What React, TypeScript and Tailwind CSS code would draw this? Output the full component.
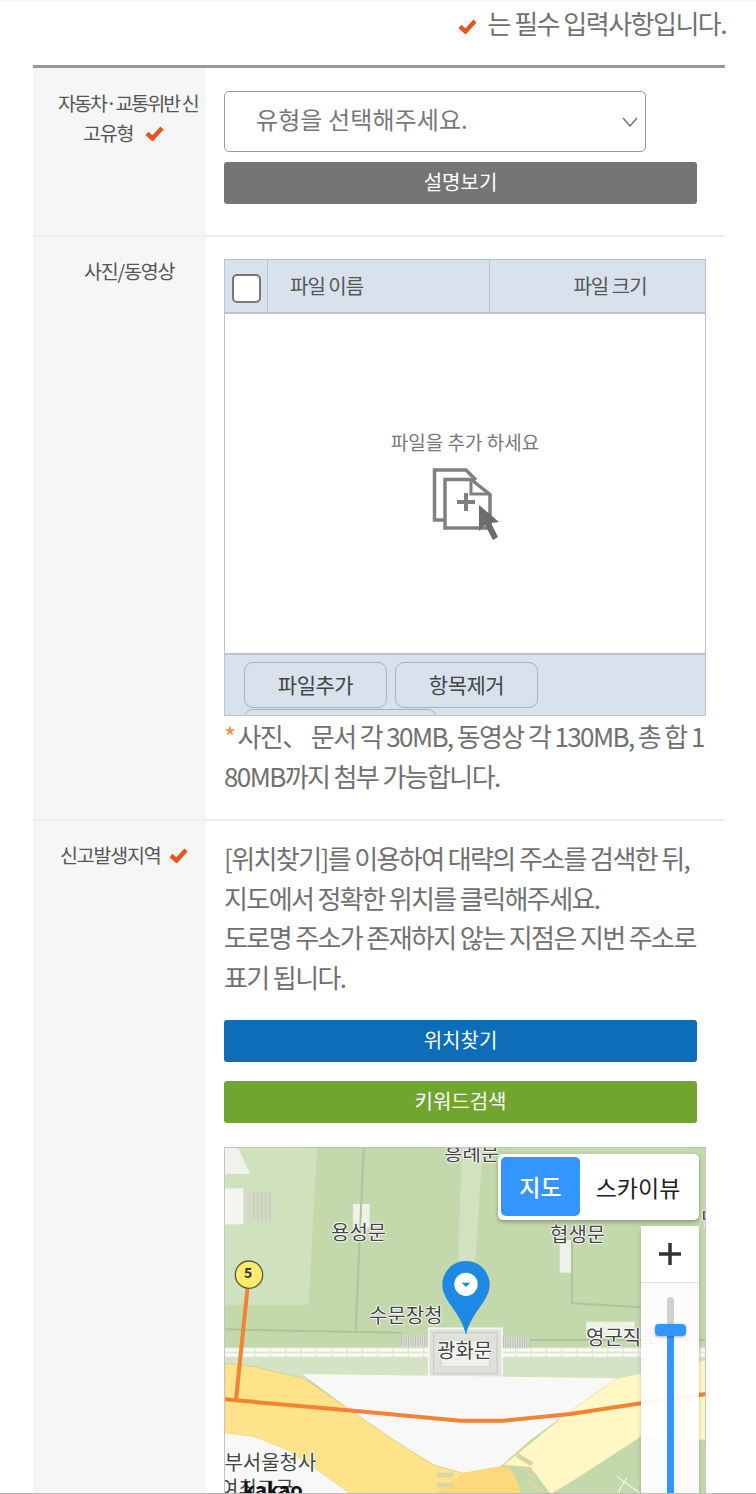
const font = "font-['Noto_Sans_CJK_KR','Noto_Sans',sans-serif]";

function Check({ className }: { className: string }) {
  return (
    <svg viewBox="0 0 19 15" className={className}>
      <path d="M2 7.5l5.5 5L17 2" fill="none" stroke="#e8541a" strokeWidth="4.4" />
    </svg>
  );
}

function FileIcon() {
  return (
    <svg viewBox="0 0 70 76" className="h-[76px] w-[70px]">
      <path d="M14 54H3.5V4H35l10 10" fill="none" stroke="#808080" strokeWidth="3.5" />
      <path d="M14 13.5h26l19 15V62H14z" fill="#fff" stroke="#808080" strokeWidth="3.5" />
      <path d="M40 14v14h18" fill="none" stroke="#808080" strokeWidth="3" />
      <path d="M26 36h18M35 27v18" stroke="#808080" strokeWidth="4" />
      <path d="M48 39v26l6-6 8 15 5-3-7-14 8-1z" fill="#6c6c6e" />
    </svg>
  );
}

function ActionButton({ label, color }: { label: string; color: string }) {
  return (
    <button className={`h-[42px] w-[473px] rounded-[3px] pb-[3px] text-[20px] text-white ${color}`}>
      {label}
    </button>
  );
}

function MapLabel({ text, className }: { text: string; className: string }) {
  return (
    <span className={`absolute whitespace-nowrap text-[20px] leading-none text-[#444] [text-shadow:-1px_0_#fff,1px_0_#fff,0_-1px_#fff,0_1px_#fff] ${className}`}>
      {text}
    </span>
  );
}

function KakaoMap() {
  return (
    <div className="relative h-[346px] overflow-hidden border-x border-t border-[#c4c4c4]">
      <svg viewBox="14 24 1443 1038" className="absolute left-0 top-0 h-[346px] w-[481px]">
        <rect x="14" y="24" width="1443" height="1038" fill="#c3d8ab" />
        <path d="M14 24h276l-25 470H14z" fill="#d0e1bd" />
        <path d="M14 24h40l35 78H14z" fill="#f0f3ea" />
        <path d="M14 145h56v108H14z" fill="#f3f5ee" />
        <path d="M70 145h20l3 5h70v95H93l-3 8H70z" fill="#d2dcc5" />
        <path d="M100 155v85M112 155v85M124 155v85M136 155v85M148 155v85" stroke="#b8c4a8" strokeWidth="2" />
        <path d="M725 24h62l-22 340h-52z" fill="#d2e2c0" />
        <path d="M398 192h50v70h-50z" fill="#eef1e6" />
        <path d="M1018 300h40v98h-40z" fill="#eef1e6" />
        <path d="M1098 545h145v50h-145z" fill="#eef1e6" />
        <path d="M430 24l-24 550M1055 300v190l210 12M14 568l530 10M850 600h607" fill="none" stroke="#afc39c" strokeWidth="6" />

        <path d="M14 650h1443v70H14z" fill="#d3e3c3" />
        <path d="M14 622h1443v30H14z" fill="#dfe6d4" />
        <path d="M14 630h1443M14 645h1443" stroke="#fbfbf8" strokeWidth="9" strokeDasharray="42 4" />
        <rect x="542" y="585" width="82" height="35" fill="#dcdfd6" />
        <rect x="848" y="590" width="80" height="35" fill="#dcdfd6" />
        <path d="M542 602h82M848 607h80" stroke="#b9bdb2" strokeWidth="33" strokeDasharray="3 4" />
        <rect x="625" y="565" width="220" height="148" fill="#dfe2da" stroke="#f7f7f4" strokeWidth="5" />
        <rect x="640" y="578" width="190" height="122" fill="none" stroke="#c5c9bf" strokeWidth="3" />
        <rect x="662" y="600" width="146" height="80" fill="#eff0eb" stroke="#d0d3ca" strokeWidth="3" />

        <path d="M245 702l945 13-60 55-90 50-110 80-90 80-110 20-90-25-120-75-130-90z" fill="#f8f8f8" />
        <path d="M850 975l190-155 150-105 72-15 195-40v240l-195-10-200 130-70 42H990l-60-80z" fill="#fff7c4" stroke="#e2d9a0" strokeWidth="2" />
        <path d="M14 670l86 10 150 35 140 95 130 90 120 75 90 25 110-20 60 82H390L290 990l-90-60-100-40-86-10z" fill="#fee38b" stroke="#dcc577" strokeWidth="2" />
        <path d="M14 880l86 10 100 40 90 60 100 72H14z" fill="#f8f8f8" />
        <path d="M730 1000l110-20c30 0 50 20 60 82H640z" fill="#fdd97c" />
        <path d="M890 945l45 28M905 985l45 28M920 1025l45 28M650 1005h50M650 1035h50" stroke="#d8d5a8" strokeWidth="14" />
        <path d="M1190 1010l70 50M1190 1062l30-50" stroke="#fff" strokeWidth="3" fill="none" />

        <path d="M82 440l-35 340" stroke="#f58232" strokeWidth="12" fill="none" />
        <path d="M14 778l386 34 320 30h130l200-20 212-32 195-28" stroke="#f58232" strokeWidth="12" fill="none" />
        <circle cx="86" cy="404" r="41" fill="#ffec6e" stroke="#5c5a3c" strokeWidth="4" />
        <path d="M737 363c-40 0-71 32-71 71 0 50 55 80 71 150 16-70 71-100 71-150 0-39-31-71-71-71z" fill="#1e88e5" />
        <circle cx="737" cy="433" r="35" fill="#fff" />
        <path d="M724 428h26l-13 13z" fill="#1e88e5" />
      </svg>

      <span className="absolute left-[19px] top-[117px] text-[14px] font-bold leading-none text-[#333]">5</span>
      <MapLabel text="흥례문" className="left-[219px] top-[-5px]" />
      <MapLabel text="용성문" className="left-[106px] top-[74px]" />
      <MapLabel text="협생문" className="left-[325px] top-[76px]" />
      <MapLabel text="수문장청" className="left-[144px] top-[157px]" />
      <MapLabel text="광화문" className="left-[212px] top-[192px]" />
      <MapLabel text="영군직소" className="left-[361px] top-[179px]" />
      <MapLabel text="민" className="left-[476px] top-[61px]" />
      <MapLabel text="정부서울청사" className="left-[-19px] top-[304px]" />
      <MapLabel text="여최고궁" className="left-[-5px] top-[330px]" />
      <span className="absolute left-[18px] top-[331px] text-[20px] font-bold leading-none text-[#111]">kakao</span>

      <div className="absolute left-[273px] top-[6px] flex h-[66px] w-[201px] rounded-[5px] bg-white p-[3px] shadow-[0_2px_4px_rgba(0,0,0,0.3)]">
        <div className="flex h-[59px] w-[79px] items-center justify-center rounded-[5px] bg-[#3396ff] text-[23px] font-medium text-white">
          지도
        </div>
        <div className="flex flex-1 items-center justify-center text-[23px] text-[#222]">스카이뷰</div>
      </div>

      <div className="absolute bottom-0 left-[416px] top-[78px] w-[58px] rounded-t-[5px] bg-white/95 shadow-[0_2px_4px_rgba(0,0,0,0.2)]">
        <div className="flex h-[57px] items-center justify-center border-b border-[#ddd] bg-white">
          <svg viewBox="0 0 24 24" className="h-[24px] w-[24px]">
            <path d="M1 12h22M12 1v22" stroke="#333" strokeWidth="3.5" />
          </svg>
        </div>
        <div className="relative mx-auto mt-[14px] h-[300px] w-[7px] rounded-t-[4px] bg-[#cfcfcf]">
          <div className="absolute inset-x-0 bottom-0 top-[33px] bg-[#3396ff]" />
          <div className="absolute left-[-12px] top-[27px] h-[12px] w-[31px] rounded-[4px] bg-[#3396ff] shadow-[0_1px_3px_rgba(0,0,0,0.3)]" />
        </div>
      </div>
    </div>
  );
}

export default function App() {
  return (
    <div className={`h-[1494px] overflow-hidden border-b border-[#bbb] bg-white ${font}`}>
      <div className="flex h-[65px] items-start justify-end gap-[10px] border-t border-[#f4f4f4] pr-[30px] pt-[4px]">
        <Check className="mt-[14px] h-[15px] w-[19px]" />
        <p className="text-[26px] leading-[36px] tracking-[-1.5px] text-[#707070]">는 필수 입력사항입니다.</p>
      </div>

      <div className="ml-[33px] w-[692px] border-t-[3px] border-[#999]">
        {/* 유형 */}
        <div className="flex h-[169px] border-b-[2px] border-[#eee]">
          <div className="w-[173px] shrink-0 bg-[#f6f6f6] pt-[20px] text-[19.5px] leading-[30px] tracking-[-1.2px] text-[#555]">
            <p className="pl-[25px] tracking-[-1.9px]">자동차·교통위반 신</p>
            <p className="flex items-center gap-[12px] pl-[50px]">
              고유형 <Check className="h-[15px] w-[19px]" />
            </p>
          </div>
          <div className="flex-1 pl-[18px] pt-[23px]">
            <div className="flex h-[61px] w-[422px] items-center justify-between rounded-[5px] border border-[#999] pl-[31px] pr-[7px] text-[24px] tracking-[0.1px] text-[#777]">
              <span className="pb-[6px]">유형을 선택해주세요.</span>
              <svg viewBox="0 0 16 10" className="h-[10px] w-[16px]">
                <path d="M1 1l7 8 7-8" fill="none" stroke="#666" strokeWidth="1.2" />
              </svg>
            </div>
            <div className="mt-[10px]">
              <ActionButton label="설명보기" color="bg-[#757575]" />
            </div>
          </div>
        </div>

        {/* 사진 */}
        <div className="flex h-[584px] border-b-[2px] border-[#eee]">
          <div className="w-[173px] shrink-0 bg-[#f6f6f6] pl-[51px] pt-[19px] text-[19.5px] leading-[30px] tracking-[-1.2px] text-[#555]">
            사진/동영상
          </div>
          <div className="flex-1 pl-[18px] pt-[22px]">
            <div className="h-[457px] w-[482px] overflow-hidden border border-[#b9c4cf]">
              <div className="flex h-[54px] border-b-[2px] border-[#b9c4cf] bg-[#d9e2ec] text-[20px] tracking-[-1px] text-[#555]">
                <div className="flex w-[43px] items-center justify-center border-r border-[#b9c4cf] pt-[4px]">
                  <div className="h-[29px] w-[29px] rounded-[5px] border-2 border-[#777] bg-white" />
                </div>
                <div className="flex w-[222px] items-center border-r border-[#b9c4cf] pl-[22px]">파일 이름</div>
                <div className="flex flex-1 items-center justify-center pl-[25px]">파일 크기</div>
              </div>
              <div className="flex h-[341px] flex-col items-center border-b-[2px] border-[#b9c4cf] pt-[114px]">
                <p className="text-[19px] leading-[28px] text-[#777]">파일을 추가 하세요</p>
                <div className="ml-[1px] mt-[10px]">
                  <FileIcon />
                </div>
              </div>
              <div className="flex flex-wrap gap-x-[8px] gap-y-[1px] bg-[#d9e2ec] pl-[19px] pt-[7px]">
                <button className="h-[46px] w-[143px] rounded-[9px] border border-[#aab2bb] text-[21px] tracking-[-0.5px] text-[#444]">파일추가</button>
                <button className="h-[46px] w-[143px] rounded-[9px] border border-[#aab2bb] text-[21px] tracking-[-0.5px] text-[#444]">항목제거</button>
                <div className="h-[46px] w-[193px] rounded-[9px] border border-[#aab2bb]" />
              </div>
            </div>
            <p className="w-[482px] break-all text-[26px] leading-[40px] tracking-[-1.6px] text-[#707070]">
              <span className="mr-[3px] text-[#f08a3c]">*</span>사진、 문서 각 30MB, 동영상 각 130MB, 총 합 180MB까지 첨부 가능합니다.
            </p>
          </div>
        </div>

        {/* 신고발생지역 */}
        <div className="flex">
          <div className="flex h-[700px] w-[173px] shrink-0 items-start gap-[9px] bg-[#f6f6f6] pl-[27px] pt-[19px] text-[19.5px] leading-[30px] tracking-[-1.2px] text-[#555]">
            신고발생지역
            <Check className="mt-[8px] h-[15px] w-[19px]" />
          </div>
          <div className="flex-1 pl-[18px] pt-[17px]">
            <p className="text-[26px] leading-[39.5px] tracking-[-1.6px] text-[#707070]">
              [위치찾기]를 이용하여 대략의 주소를 검색한 뒤,
              <br />
              지도에서 정확한 위치를 클릭해주세요.
              <br />
              도로명 주소가 존재하지 않는 지점은 지번 주소로
              <br />
              표기 됩니다.
            </p>
            <div className="mt-[24px] flex flex-col gap-[19px]">
              <ActionButton label="위치찾기" color="bg-[#0e6db8]" />
              <ActionButton label="키워드검색" color="bg-[#70a62f]" />
            </div>
            <div className="mt-[24px] w-[482px]">
              <KakaoMap />
            </div>
          </div>
        </div>
      </div>
    </div>
  );
}
